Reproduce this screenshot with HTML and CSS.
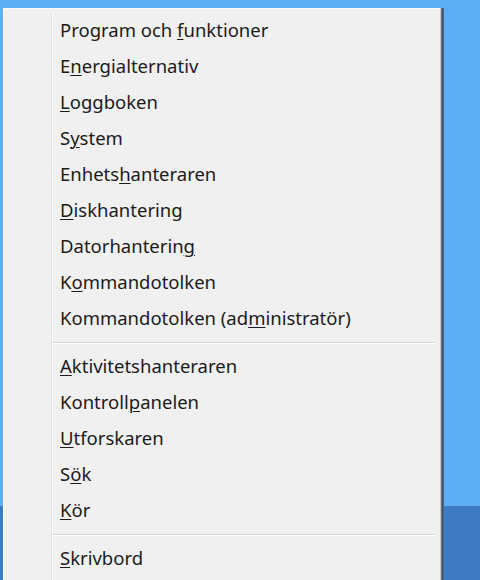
FILE: index.html
```html
<!DOCTYPE html>
<html lang="sv">
<head>
<meta charset="utf-8">
<link rel="stylesheet" href="styles.css">
</head>
<body>
<div class="menu">
  <ul class="list">
    <li class="item">Program och <u>f</u>unktioner</li>
    <li class="item">E<u>n</u>ergialternativ</li>
    <li class="item"><u>L</u>oggboken</li>
    <li class="item">S<u>y</u>stem</li>
    <li class="item">Enhets<u>h</u>anteraren</li>
    <li class="item"><u>D</u>iskhantering</li>
    <li class="item">Datorhanterin<u>g</u></li>
    <li class="item">K<u>o</u>mmandotolken</li>
    <li class="item">Kommandotolken (ad<u>m</u>inistratör)</li>
    <li class="sep"></li>
    <li class="item"><u>A</u>ktivitetshanteraren</li>
    <li class="item">Kontroll<u>p</u>anelen</li>
    <li class="item"><u>U</u>tforskaren</li>
    <li class="item">S<u>ö</u>k</li>
    <li class="item"><u>K</u>ör</li>
    <li class="sep"></li>
    <li class="item"><u>S</u>krivbord</li>
  </ul>
</div>
</body>
</html>
```

FILE: styles.css
```css
html, body {
  margin: 0;
  padding: 0;
  height: 580px;
  overflow: hidden;
}
body {
  background: linear-gradient(to bottom, #5eaef3 0, #5eaef3 506px, #3d7bc4 506px, #3d7bc4 100%);
  font-family: "Segoe UI", "Noto Sans", "Open Sans", sans-serif;
  display: flex;
  align-items: flex-start;
}
.menu {
  margin: 8px 0 0 3px;
  width: 438px;
  height: 580px;
  box-sizing: border-box;
  background: #f0f0f0;
  border-top: 1px solid #fbfbfb;
  border-left: 1px solid #fbfbfb;
  border-right: 1px solid #c8c8c8;
  box-shadow: 1px 0 0 #6b6e72, 2px 0 0 #3e5878, 3px 0 0 #40679a;
  padding-top: 3px;
}
.list {
  list-style: none;
  margin: 0 0 0 47px;
  padding: 0;
  border-left: 1px solid #e2e3e3;
  box-shadow: inset 1px 0 0 #ffffff;
  height: 100%;
}
.item {
  height: 36px;
  line-height: 36px;
  padding-left: 8px;
  font-size: 18.5px;
  color: #1b1b1b;
  white-space: nowrap;
}
.item u {
  text-decoration-thickness: 1px;
  text-underline-offset: 2px;
}
.sep {
  height: 12px;
  margin-right: 4px;
  display: flex;
  flex-direction: column;
  justify-content: center;
}
.sep::before {
  content: "";
  display: block;
  height: 1px;
  background: #d7d7d7;
  box-shadow: 0 1px 0 #ffffff;
}
```
